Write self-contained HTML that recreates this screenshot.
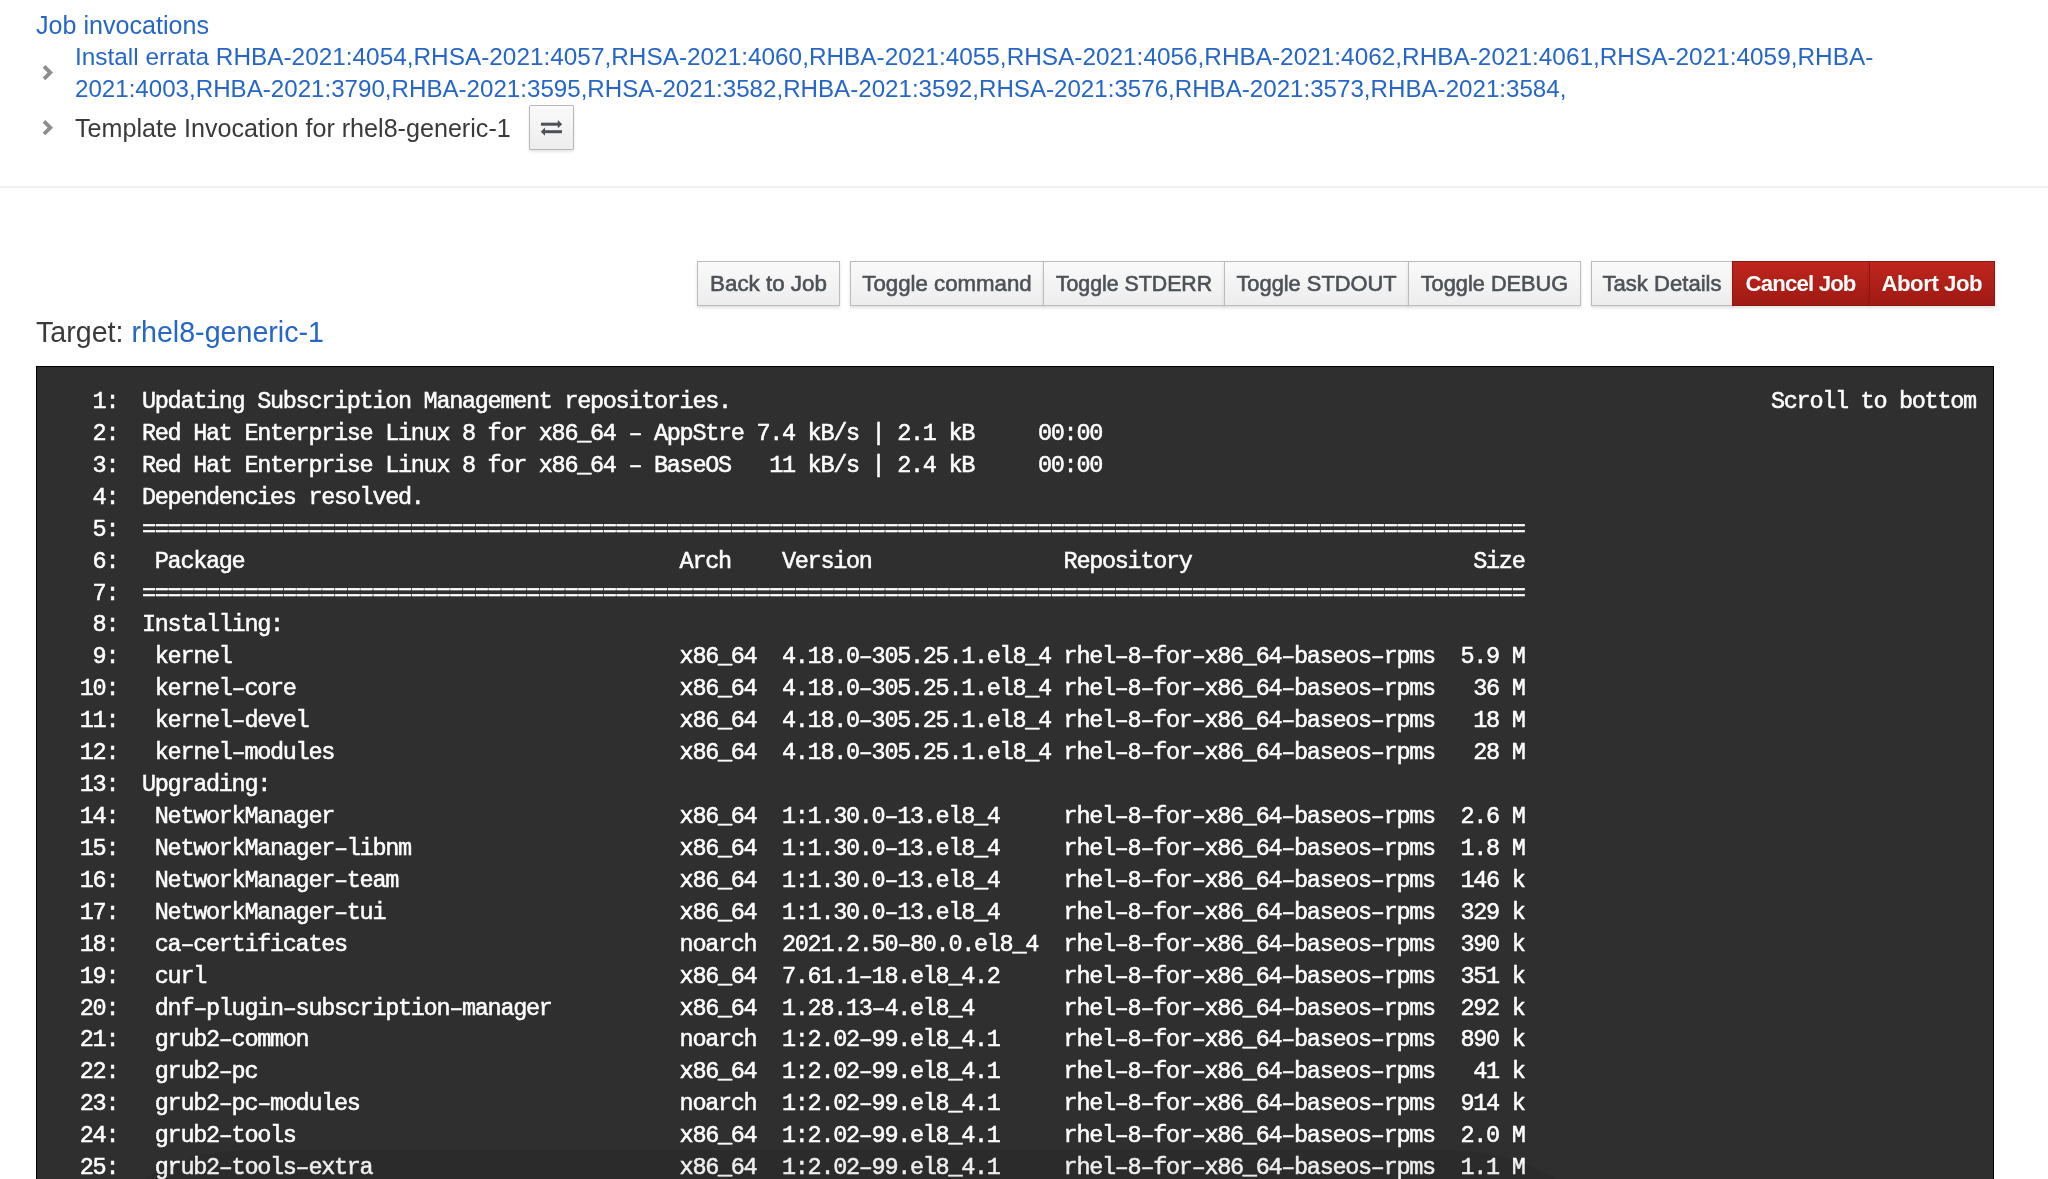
<!DOCTYPE html>
<html><head><meta charset="utf-8">
<style>
html,body{margin:0;padding:0;background:#fff;width:2048px;height:1179px;overflow:hidden;}
body{position:relative;font-family:"Liberation Sans",sans-serif;}
.a,.btn,pre,#scroll{will-change:transform;}
.a{position:absolute;white-space:nowrap;}
.link{color:#2566c8;}
#jobinv{left:36px;top:9px;font-size:25.1px;line-height:32px;}
#errata{left:75px;top:41px;font-size:24.34px;line-height:32px;}
#tmpl{left:75px;top:111.5px;font-size:25.14px;line-height:32px;color:#3a3a3a;}
#hr{left:0;top:186px;width:2048px;height:2px;background:#f0f0f0;}
.btn{position:absolute;top:261px;height:43px;line-height:45px;border:1px solid #bbb;
 background:linear-gradient(#fafafa,#ededed);color:#4d5258;text-align:center;font-size:21.5px;box-sizing:content-box;-webkit-text-stroke:0.6px #4d5258;
 box-shadow:0 2px 3px rgba(3,3,3,.12);}
.btn.d{background:linear-gradient(#bf261d,#9e1a14);border-color:#8f1610;color:#fff;font-weight:bold;-webkit-text-stroke:0;}
#ibtn{left:529px;top:105px;width:43px;height:43px;border:1px solid #b7b7b7;background:linear-gradient(#fafafa,#ededed);
 box-shadow:0 2px 3px rgba(3,3,3,.1);border-radius:1px;}
#target{left:36px;top:316.2px;font-size:28.63px;line-height:32px;color:#3a3a3a;}
#term{left:36px;top:366px;width:1956px;height:900px;background:#2f2f2f;border:1px solid #000;}
#nums{position:absolute;left:67px;top:386px;margin:0;font-family:"Liberation Mono",monospace;font-size:23.5px;letter-spacing:-1.302px;line-height:31.92px;color:#fff;-webkit-text-stroke:0.5px #fff;white-space:pre;}
#pre{position:absolute;left:142.3px;top:386px;margin:0;font-family:"Liberation Mono",monospace;font-size:23.5px;letter-spacing:-1.302px;line-height:31.92px;color:#fff;-webkit-text-stroke:0.5px #fff;white-space:pre;}
#scroll{position:absolute;left:1771px;top:386px;font-family:"Liberation Mono",monospace;font-size:23.5px;letter-spacing:-1.302px;line-height:31.92px;color:#fff;-webkit-text-stroke:0.5px #fff;white-space:pre;}
svg{position:absolute;left:0;top:0;}
</style></head><body>
<div class="a link" id="jobinv">Job invocations</div>
<div class="a link" id="errata"><span style="font-size:24.37px">Install errata RHBA-2021:4054,RHSA-2021:4057,RHSA-2021:4060,RHBA-2021:4055,RHSA-2021:4056,RHBA-2021:4062,RHBA-2021:4061,RHSA-2021:4059,RHBA-</span><br><span style="font-size:24.14px">2021:4003,RHBA-2021:3790,RHBA-2021:3595,RHSA-2021:3582,RHBA-2021:3592,RHSA-2021:3576,RHBA-2021:3573,RHBA-2021:3584,</span></div>
<div class="a" id="tmpl">Template Invocation for rhel8-generic-1</div>
<div class="a" id="ibtn"></div>
<div class="a" id="hr"></div>
<div class="btn" style="left:697px;width:141px;font-size:22.37px;line-height:44.49px;">Back to Job</div>
<div class="btn" style="left:850px;width:192px;font-size:22.26px;line-height:44.56px;">Toggle command</div>
<div class="btn" style="left:1043px;width:180px;font-size:21.31px;line-height:45.22px;">Toggle STDERR</div>
<div class="btn" style="left:1224px;width:183px;font-size:21.84px;line-height:44.86px;">Toggle STDOUT</div>
<div class="btn" style="left:1408px;width:171px;font-size:21.76px;line-height:44.91px;">Toggle DEBUG</div>
<div class="btn" style="left:1591px;width:140px;font-size:22.1px;line-height:44.68px;">Task Details</div>
<div class="btn d" style="left:1732px;width:136px;font-size:22.2px;letter-spacing:-0.84px;text-indent:-0.84px;line-height:44.61px;">Cancel Job</div>
<div class="btn d" style="left:1869px;width:124px;font-size:22.2px;letter-spacing:-0.44px;text-indent:-0.44px;line-height:44.61px;">Abort Job</div>
<div class="a" id="target">Target: <span class="link">rhel8-generic-1</span></div>
<div class="a" id="term"></div>
<pre id="nums">  1:
  2:
  3:
  4:
  5:
  6:
  7:
  8:
  9:
 10:
 11:
 12:
 13:
 14:
 15:
 16:
 17:
 18:
 19:
 20:
 21:
 22:
 23:
 24:
 25:</pre><pre id="pre">Updating Subscription Management repositories.
Red Hat Enterprise Linux 8 for x86_64 – AppStre 7.4 kB/s | 2.1 kB     00:00
Red Hat Enterprise Linux 8 for x86_64 – BaseOS   11 kB/s | 2.4 kB     00:00
Dependencies resolved.
============================================================================================================
 Package                                  Arch    Version               Repository                      Size
============================================================================================================
Installing:
 kernel                                   x86_64  4.18.0–305.25.1.el8_4 rhel–8–for–x86_64–baseos–rpms  5.9 M
 kernel–core                              x86_64  4.18.0–305.25.1.el8_4 rhel–8–for–x86_64–baseos–rpms   36 M
 kernel–devel                             x86_64  4.18.0–305.25.1.el8_4 rhel–8–for–x86_64–baseos–rpms   18 M
 kernel–modules                           x86_64  4.18.0–305.25.1.el8_4 rhel–8–for–x86_64–baseos–rpms   28 M
Upgrading:
 NetworkManager                           x86_64  1:1.30.0–13.el8_4     rhel–8–for–x86_64–baseos–rpms  2.6 M
 NetworkManager–libnm                     x86_64  1:1.30.0–13.el8_4     rhel–8–for–x86_64–baseos–rpms  1.8 M
 NetworkManager–team                      x86_64  1:1.30.0–13.el8_4     rhel–8–for–x86_64–baseos–rpms  146 k
 NetworkManager–tui                       x86_64  1:1.30.0–13.el8_4     rhel–8–for–x86_64–baseos–rpms  329 k
 ca–certificates                          noarch  2021.2.50–80.0.el8_4  rhel–8–for–x86_64–baseos–rpms  390 k
 curl                                     x86_64  7.61.1–18.el8_4.2     rhel–8–for–x86_64–baseos–rpms  351 k
 dnf–plugin–subscription–manager          x86_64  1.28.13–4.el8_4       rhel–8–for–x86_64–baseos–rpms  292 k
 grub2–common                             noarch  1:2.02–99.el8_4.1     rhel–8–for–x86_64–baseos–rpms  890 k
 grub2–pc                                 x86_64  1:2.02–99.el8_4.1     rhel–8–for–x86_64–baseos–rpms   41 k
 grub2–pc–modules                         noarch  1:2.02–99.el8_4.1     rhel–8–for–x86_64–baseos–rpms  914 k
 grub2–tools                              x86_64  1:2.02–99.el8_4.1     rhel–8–for–x86_64–baseos–rpms  2.0 M
 grub2–tools–extra                        x86_64  1:2.02–99.el8_4.1     rhel–8–for–x86_64–baseos–rpms  1.1 M</pre>
<div id="scroll">Scroll to bottom</div>
<div style="position:absolute;left:44px;top:1150px;width:1611px;height:600px;border-radius:205px;background:rgba(0,0,0,0.065);"></div>
<svg width="2048" height="1179" viewBox="0 0 2048 1179">
 <polyline points="44,66.3 50.3,72.6 44,78.9" fill="none" stroke="#8b8d8f" stroke-width="3.8"/>
 <polyline points="44,121.4 50.3,127.7 44,134" fill="none" stroke="#8b8d8f" stroke-width="3.8"/>
 <g fill="#4d5258">
  <rect x="541" y="122.7" width="18" height="3"/>
  <polygon points="557.8,120 562.2,124.2 557.8,128.3"/>
  <rect x="544" y="130.2" width="18" height="3"/>
  <polygon points="545,127.6 540.8,131.7 545,135.8"/>
 </g>
</svg>
</body></html>
